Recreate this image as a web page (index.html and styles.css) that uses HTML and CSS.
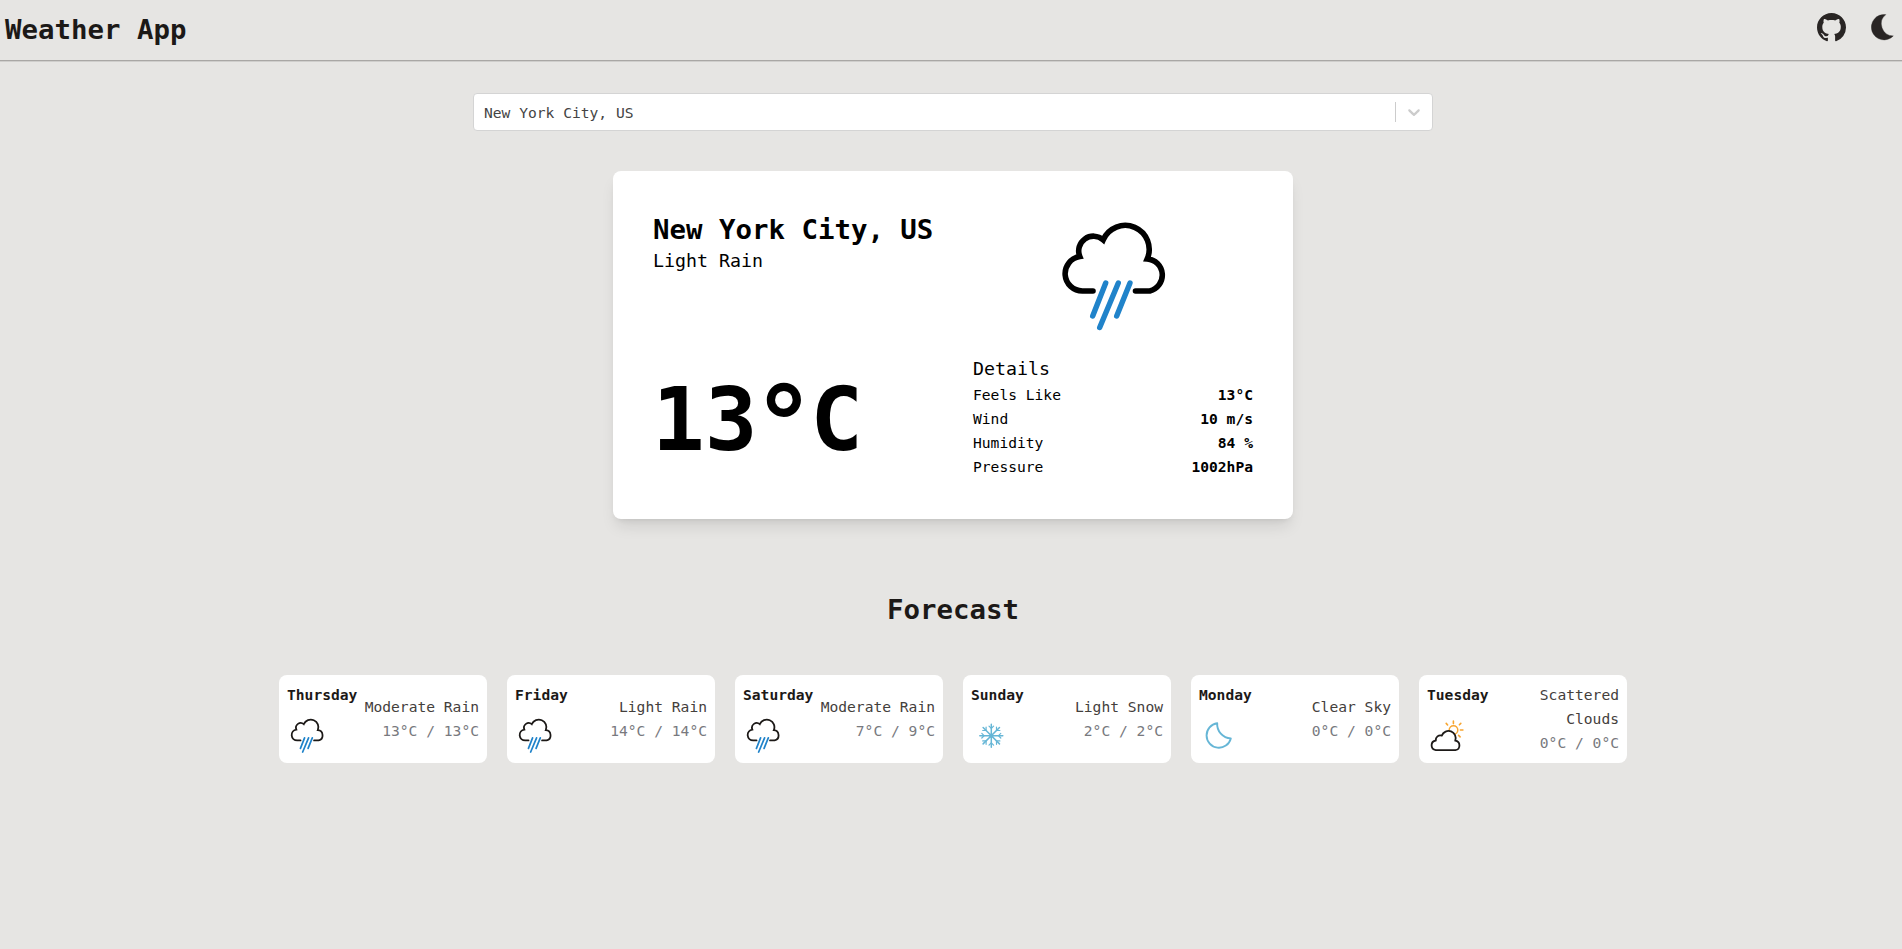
FILE: index.html
```html
<!DOCTYPE html>
<html lang="en">
<head>
<meta charset="utf-8">
<title>Weather App</title>
<link rel="stylesheet" href="styles.css">
</head>
<body>
<svg class="defs" aria-hidden="true">
  <symbol id="rain" viewBox="0 0 150 150">
    <path d="M53 91H42.5A17.3 17.3 0 0 1 39.8 56.6A14.8 14.8 0 0 1 63.2 39.8A23.9 23.9 0 0 1 107.2 58.9A16.3 16.3 0 0 1 109.8 91H95.5" fill="none" stroke="currentColor" stroke-width="5.6" stroke-linecap="round"/>
    <path d="M65.7 83L52.7 116M78.3 83L59.7 127.5M90 83L76.7 116" fill="none" stroke="#2083ca" stroke-width="5.4" stroke-linecap="round"/>
  </symbol>
</svg>
<header class="header">
  <h1 class="brand">Weather App</h1>
  <nav class="actions">
    <svg class="github" viewBox="0 0 16 16"><path fill="currentColor" d="M8 0C3.58 0 0 3.58 0 8c0 3.54 2.29 6.53 5.47 7.59.4.07.55-.17.55-.38 0-.19-.01-.82-.01-1.49-2.01.37-2.53-.49-2.69-.94-.09-.23-.48-.94-.82-1.13-.28-.15-.68-.52-.01-.53.63-.01 1.08.58 1.23.82.72 1.21 1.87.87 2.33.66.07-.52.28-.87.51-1.07-1.78-.2-3.64-.89-3.64-3.95 0-.87.31-1.59.82-2.15-.08-.2-.36-1.02.08-2.12 0 0 .67-.21 2.2.82.64-.18 1.32-.27 2-.27s1.36.09 2 .27c1.53-1.04 2.2-.82 2.2-.82.44 1.1.16 1.92.08 2.12.51.56.82 1.27.82 2.15 0 3.07-1.87 3.75-3.65 3.95.29.25.54.73.54 1.48 0 1.07-.01 1.93-.01 2.2 0 .21.15.46.55.38A8.01 8.01 0 0 0 16 8c0-4.42-3.58-8-8-8z"/></svg>
    <svg class="moon" viewBox="0 0 23 27"><path fill="currentColor" stroke="currentColor" stroke-width=".4" stroke-linejoin="round" d="M14.8 .6A12.7 12.7 0 1 0 22.3 21.9A12 12 0 0 1 14.8 .6Z"/></svg>
  </nav>
</header>
<main class="main">
  <div class="select">
    <span class="select-value">New York City, US</span>
    <span class="select-line"></span>
    <span class="select-arrow"><svg width="20" height="20" viewBox="0 0 20 20"><path fill="currentColor" d="M4.516 7.548c0.436-0.446 1.043-0.481 1.576 0l3.908 3.747 3.908-3.747c0.533-0.481 1.141-0.446 1.574 0 0.436 0.445 0.408 1.197 0 1.615-0.406 0.418-4.695 4.502-4.695 4.502-0.217 0.223-0.502 0.335-0.787 0.335s-0.57-0.112-0.789-0.335c0 0-4.287-4.084-4.695-4.502s-0.436-1.17 0-1.615z"/></svg></span>
  </div>
  <section class="current">
    <div class="place">
      <h2 class="city">New York City, US</h2>
      <p class="condition">Light Rain</p>
    </div>
    <svg class="current-icon"><use href="#rain"/></svg>
    <p class="temp">13<span class="degree">°</span>C</p>
    <div class="details">
      <h3 class="details-title">Details</h3>
      <p class="row"><span>Feels Like</span><b>13°C</b></p>
      <p class="row"><span>Wind</span><b>10 m/s</b></p>
      <p class="row"><span>Humidity</span><b>84 %</b></p>
      <p class="row"><span>Pressure</span><b>1002hPa</b></p>
    </div>
  </section>
  <h2 class="forecast-title">Forecast</h2>
  <section class="forecast">
    <article class="day">
      <div class="day-side"><b>Thursday</b><svg class="day-icon" viewBox="10.4 -14.2 151 151"><use href="#rain" width="150" height="150"/></svg></div>
      <div class="day-info"><p>Moderate Rain</p><p class="range">13°C / 13°C</p></div>
    </article>
    <article class="day">
      <div class="day-side"><b>Friday</b><svg class="day-icon" viewBox="10.4 -14.2 151 151"><use href="#rain" width="150" height="150"/></svg></div>
      <div class="day-info"><p>Light Rain</p><p class="range">14°C / 14°C</p></div>
    </article>
    <article class="day">
      <div class="day-side"><b>Saturday</b><svg class="day-icon" viewBox="10.4 -14.2 151 151"><use href="#rain" width="150" height="150"/></svg></div>
      <div class="day-info"><p>Moderate Rain</p><p class="range">7°C / 9°C</p></div>
    </article>
    <article class="day">
      <div class="day-side"><b>Sunday</b>
        <svg class="day-icon" viewBox="-20.3 -28.7 48 48">
          <g fill="none" stroke="#66b6d6" stroke-width="1.5" stroke-linecap="round">
            <path d="M0-11.5V11.5M-11.5 0H11.5M-8.2-8.2L8.2 8.2M8.2-8.2L-8.2 8.2"/>
            <path d="M-2.3-9.5L0-7.2L2.3-9.5M-2.3 9.5L0 7.2L2.3 9.5M-9.5-2.3L-7.2 0L-9.5 2.3M9.5-2.3L7.2 0L9.5 2.3M-8.6-5.2H-5.2V-8.6M8.6-5.2H5.2V-8.6M-8.6 5.2H-5.2V8.6M8.6 5.2H5.2V8.6" stroke-width="1.2"/>
          </g>
        </svg></div>
      <div class="day-info"><p>Light Snow</p><p class="range">2°C / 2°C</p></div>
    </article>
    <article class="day">
      <div class="day-side"><b>Monday</b>
        <svg class="day-icon" viewBox="0 0 48 48"><path d="M18.2 16.2A12.3 12.3 0 1 0 31.8 31.4A14.3 14.3 0 0 1 18.2 16.2Z" fill="none" stroke="#66b6d6" stroke-width="1.9" stroke-linejoin="round"/></svg></div>
      <div class="day-info"><p>Clear Sky</p><p class="range">0°C / 0°C</p></div>
    </article>
    <article class="day">
      <div class="day-side"><b>Tuesday</b>
        <svg class="day-icon" viewBox="0 0 48 48">
          <circle cx="26.5" cy="23" r="4.3" fill="none" stroke="#f7a531" stroke-width="1.5"/>
          <path d="M26.4 14V16.6M19.2 16.4L20.6 18M33.8 16.4L32.4 17.8M33.4 23H35.9M31.6 28.4L33.1 29.9" fill="none" stroke="#f7a531" stroke-width="1.6" stroke-linecap="round"/>
          <path d="M8.8 43.2A4.9 4.9 0 0 1 8.8 33.5A4.6 4.6 0 0 1 14.8 28.6A7.1 7.1 0 0 1 28.2 33.7A4.8 4.8 0 0 1 28.4 43.2Z" fill="#fff" stroke="currentColor" stroke-width="1.8" stroke-linejoin="round"/>
        </svg></div>
      <div class="day-info"><p>Scattered Clouds</p><p class="range">0°C / 0°C</p></div>
    </article>
  </section>
</main>
</body>
</html>
```
FILE: styles.css
```css
* { box-sizing: border-box; margin: 0; padding: 0; }
body {
  background: #e6e5e3;
  color: #1c1917;
  font: 14.62px/24px "DejaVu Sans Mono", "Liberation Mono", monospace;
  min-height: 949px;
  overflow: hidden;
}
svg { display: block; }
.defs { position: absolute; width: 0; height: 0; }
.header {
  display: flex;
  justify-content: space-between;
  align-items: flex-start;
  height: 61px;
  padding: 0 8px 0 5px;
  border-bottom: 1px solid #a9a7a5;
  box-shadow: 0 1px 0 #cfcecc;
}
.brand { font-size: 27.4px; line-height: 36px; padding-top: 12px; }
.actions { display: flex; gap: 25px; padding-top: 13px; color: #292524; }
.github { width: 29px; height: 29px; }
.moon { width: 23px; height: 27px; margin-top: 1px; }
.main { display: flex; flex-direction: column; align-items: center; padding: 32px 0 0 4px; }
.select {
  display: flex;
  align-items: center;
  width: 960px;
  height: 38px;
  background: #fff;
  border: 1px solid #d4d4d4;
  border-radius: 4px;
}
.select-value { flex: 1; padding: 1px 0 0 10px; color: #444; }
.select-line { width: 1px; height: 20px; background: #ccc; }
.select-arrow { padding: 0 8px; color: #ccc; }
.current {
  display: grid;
  grid-template-columns: 280px 280px;
  grid-template-rows: 144px 124px;
  gap: 0 40px;
  width: 680px;
  height: 348px;
  margin-top: 40px;
  padding: 40px;
  color: #000;
  background: #fff;
  border-radius: 8px;
  box-shadow: 0 10px 15px -3px rgba(0, 0, 0, .1), 0 4px 6px -4px rgba(0, 0, 0, .1);
}
.city { font-size: 27.4px; line-height: 36px; padding-top: 1px; white-space: nowrap; }
.condition { font-size: 18.27px; line-height: 28px; margin-top: -1px; }
.current-icon { width: 150px; height: 150px; margin: -11px 0 0 67px; }
.temp { font-size: 87.7px; line-height: 96px; font-weight: 700; padding-top: 17px; margin-left: -1px; }
.degree { font-size: 1.2em; line-height: 0; margin: 0 -5.3px; vertical-align: -11px; }
.details-title { font-size: 18.27px; line-height: 28px; font-weight: 400; }
.row { display: flex; justify-content: space-between; }
.forecast-title { font-size: 27.4px; line-height: 36px; margin-top: 73px; }
.forecast { display: grid; grid-template-columns: repeat(6, 208px); gap: 20px; margin-top: 47px; }
.day { display: flex; justify-content: space-between; height: 88px; padding: 8px; background: #fff; border-radius: 8px; }
.day-side b { display: block; }
.day-icon { width: 48px; height: 48px; }
.day-info { display: flex; flex-direction: column; justify-content: center; text-align: right; color: #44403c; }
.range { color: #78797e; }
```
